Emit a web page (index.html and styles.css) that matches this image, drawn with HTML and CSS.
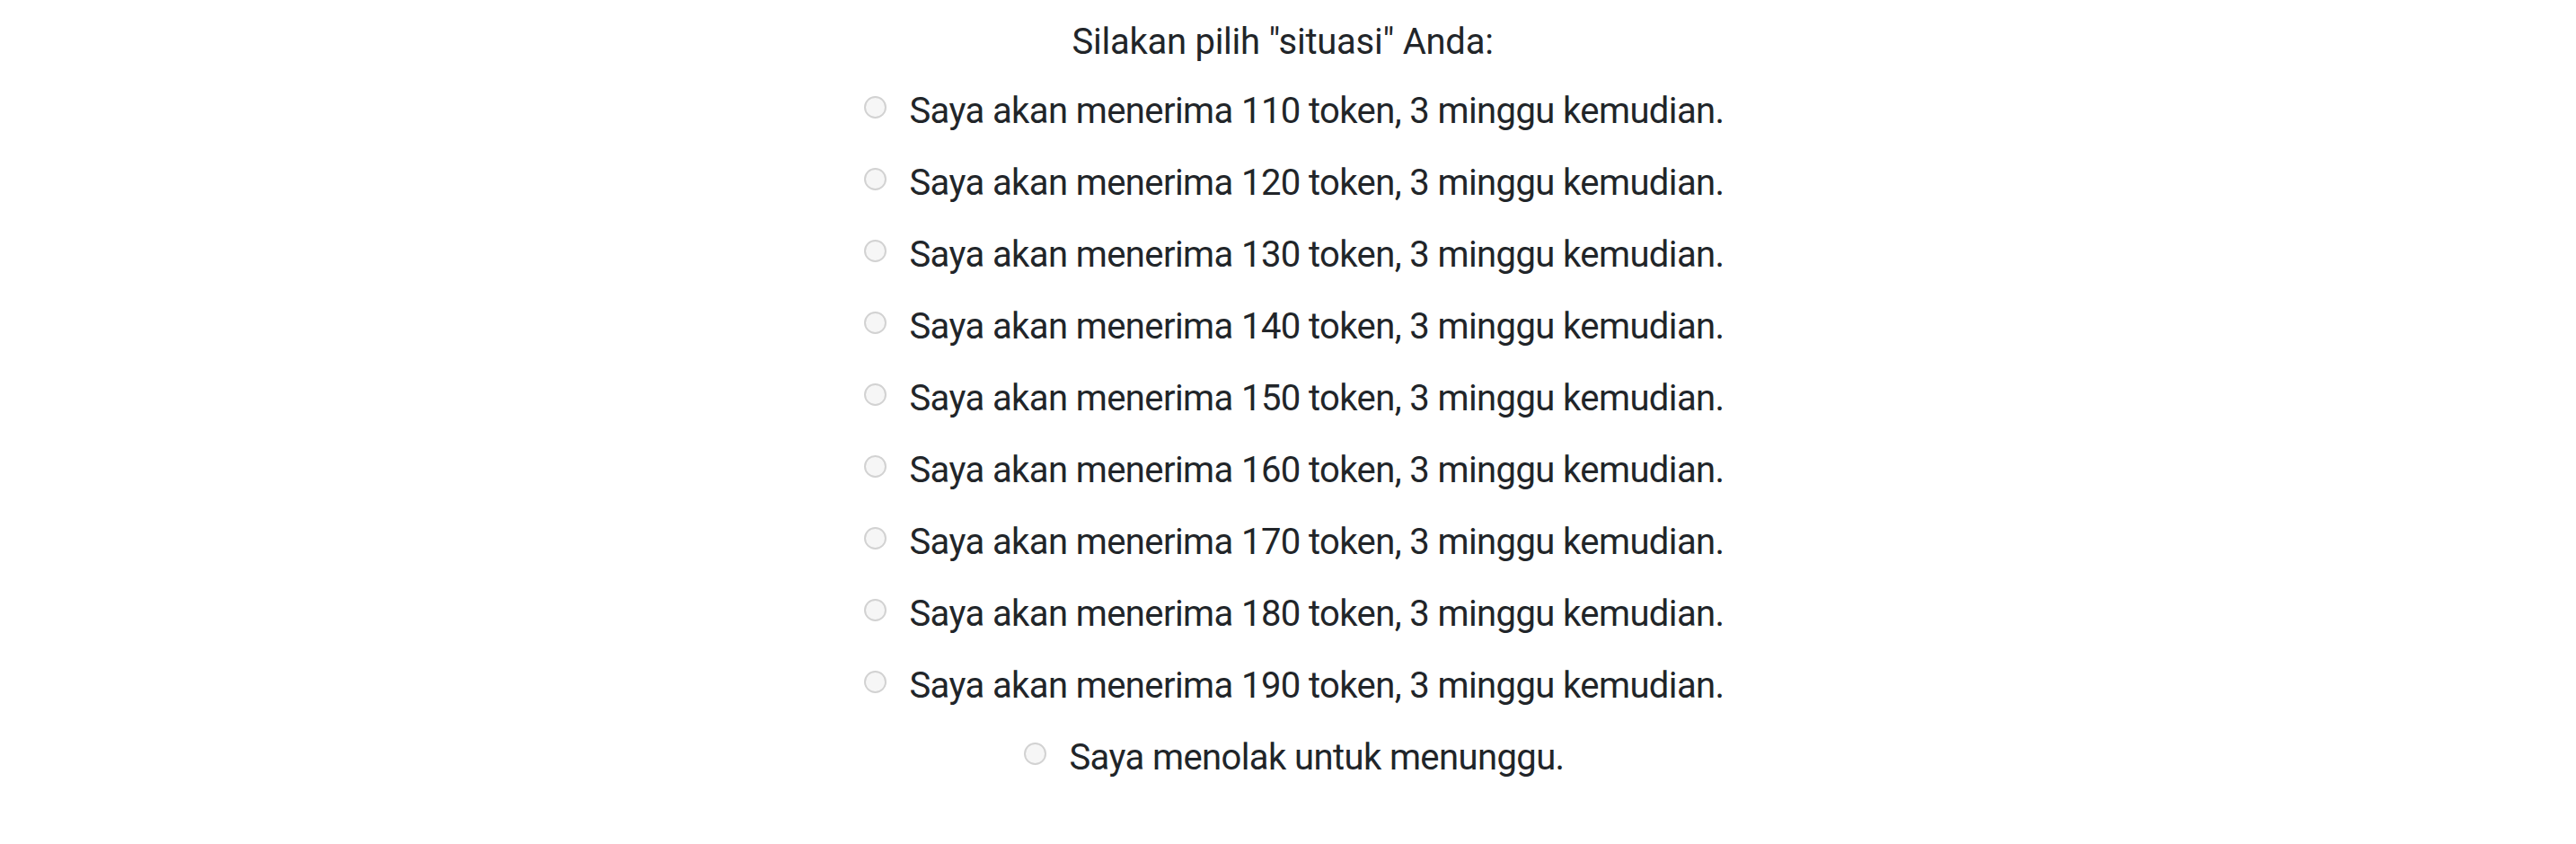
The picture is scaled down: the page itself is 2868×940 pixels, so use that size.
FILE: index.html
```html
<!DOCTYPE html>
<html lang="id">
<head>
<meta charset="utf-8">
<title>Pilihan situasi</title>
<link rel="stylesheet" href="styles.css">
</head>
<body>
<main class="survey">
  <p class="question">Silakan pilih "situasi" Anda:</p>
  <div class="options">
    <label class="option"><input type="radio" name="situasi" class="radio"><span class="option-text">Saya akan menerima 110 token, 3 minggu kemudian.</span></label>
    <label class="option"><input type="radio" name="situasi" class="radio"><span class="option-text">Saya akan menerima 120 token, 3 minggu kemudian.</span></label>
    <label class="option"><input type="radio" name="situasi" class="radio"><span class="option-text">Saya akan menerima 130 token, 3 minggu kemudian.</span></label>
    <label class="option"><input type="radio" name="situasi" class="radio"><span class="option-text">Saya akan menerima 140 token, 3 minggu kemudian.</span></label>
    <label class="option"><input type="radio" name="situasi" class="radio"><span class="option-text">Saya akan menerima 150 token, 3 minggu kemudian.</span></label>
    <label class="option"><input type="radio" name="situasi" class="radio"><span class="option-text">Saya akan menerima 160 token, 3 minggu kemudian.</span></label>
    <label class="option"><input type="radio" name="situasi" class="radio"><span class="option-text">Saya akan menerima 170 token, 3 minggu kemudian.</span></label>
    <label class="option"><input type="radio" name="situasi" class="radio"><span class="option-text">Saya akan menerima 180 token, 3 minggu kemudian.</span></label>
    <label class="option"><input type="radio" name="situasi" class="radio"><span class="option-text">Saya akan menerima 190 token, 3 minggu kemudian.</span></label>
    <label class="option"><input type="radio" name="situasi" class="radio"><span class="option-text">Saya menolak untuk menunggu.</span></label>
  </div>
</main>
</body>
</html>
```

FILE: styles.css
```css
html, body {
  margin: 0;
  padding: 0;
  background: #ffffff;
}

body {
  font-family: Roboto, "Noto Sans", "Liberation Sans", sans-serif;
  color: #212529;
  font-size: 40px;
}

.survey {
  display: flex;
  flex-direction: column;
  align-items: center;
  padding-top: 4px;
}

.question {
  margin: 0 12px 0 0;
  padding-top: 6px;
  line-height: 74px;
  font-size: 40px;
  letter-spacing: -0.25px;
  text-align: center;
}

.options {
  display: flex;
  flex-direction: column;
  align-items: center;
}

.option {
  display: flex;
  align-items: center;
  height: 80px;
  padding-left: 14px;
}

.radio {
  appearance: none;
  -webkit-appearance: none;
  box-sizing: border-box;
  width: 25px;
  height: 25px;
  margin: -10px 25px 0 0;
  border: 2px solid #d2d2d2;
  border-radius: 50%;
  background: #f6f6f6;
  flex: none;
}

.option-text {
  line-height: 80px;
  letter-spacing: -0.6px;
  white-space: nowrap;
}
```
